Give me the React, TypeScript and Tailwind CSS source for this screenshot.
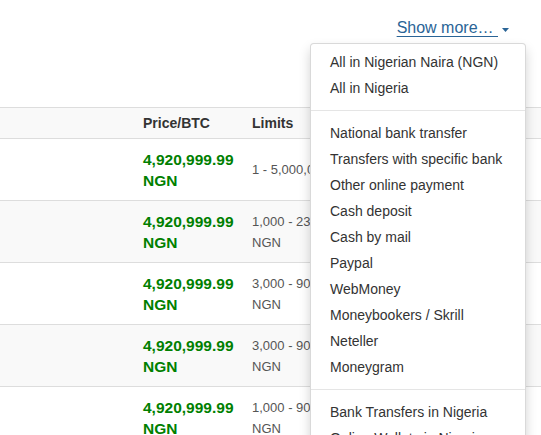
import React from "react";

const rows = [
  { bg: "bg-white", limits: "1 - 5,000,000 NGN" },
  { bg: "bg-[#f9f9f9]", limits: "1,000 - 23,000,000 NGN" },
  { bg: "bg-white", limits: "3,000 - 900,000 NGN" },
  { bg: "bg-[#f9f9f9]", limits: "3,000 - 900,000 NGN" },
  { bg: "bg-white", limits: "1,000 - 900,000 NGN" },
];

const groupA = ["All in Nigerian Naira (NGN)", "All in Nigeria"];
const groupB = [
  "National bank transfer",
  "Transfers with specific bank",
  "Other online payment",
  "Cash deposit",
  "Cash by mail",
  "Paypal",
  "WebMoney",
  "Moneybookers / Skrill",
  "Neteller",
  "Moneygram",
];
const groupC = ["Bank Transfers in Nigeria", "Online Wallets in Nigeria"];

function Item({ label }: { label: string }) {
  return (
    <div className="px-[19px] py-[3px] leading-[20px] text-[14px] text-[#333] whitespace-nowrap">
      {label}
    </div>
  );
}

export default function App() {
  return (
    <div className="relative h-[435px] w-[541px] overflow-hidden bg-white font-['Liberation_Sans',Arial,sans-serif] text-[14px] text-[#333]">
      <div className="flex h-[107px] items-start justify-end pr-[32px] pt-[17px]">
        <div className="flex items-center">
          <a className="text-[16px] leading-[22px] text-[#2a6496] underline underline-offset-[3px] whitespace-pre">
            {"Show more… "}
          </a>
          <svg width="7" height="4" viewBox="0 0 7 4" className="ml-[4px] mt-[3px]">
            <polygon points="0,0 7,0 3.5,4" fill="#2a6496" />
          </svg>
        </div>
      </div>

      <div className="w-full">
        <div className="flex h-[32px] items-center border-y border-[#ddd] bg-[#f9f9f9] font-bold">
          <div className="w-[135px]" />
          <div className="w-[109px] pl-[8px]">Price/BTC</div>
          <div className="pl-[8px]">Limits</div>
        </div>
        {rows.map((r, i) => (
          <div key={i} className={`flex h-[62px] items-center border-b border-[#ddd] ${r.bg}`}>
            <div className="w-[135px]" />
            <div className="w-[109px] pl-[8px] text-[15.5px] font-bold leading-[21px] text-[#008000]">
              <div>4,920,999.99</div>
              <div>NGN</div>
            </div>
            <div className="w-[128px] pl-[8px] text-[13px] leading-[21px] text-[#555]">{r.limits}</div>
            <div className="flex-1" />
          </div>
        ))}
      </div>

      <div className="absolute left-[310px] top-[43px] w-[216px] rounded-[4px] border border-black/15 bg-white py-[5px] shadow-[0_6px_12px_rgba(0,0,0,0.175)]">
        {groupA.map((l) => (
          <Item key={l} label={l} />
        ))}
        <div className="my-[9px] h-px bg-[#e5e5e5]" />
        {groupB.map((l) => (
          <Item key={l} label={l} />
        ))}
        <div className="my-[9px] h-px bg-[#e5e5e5]" />
        {groupC.map((l) => (
          <Item key={l} label={l} />
        ))}
      </div>
    </div>
  );
}
